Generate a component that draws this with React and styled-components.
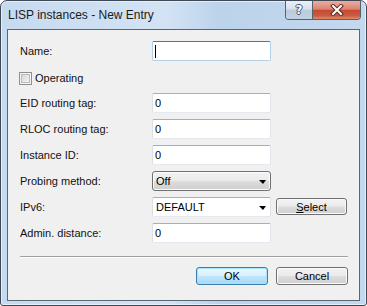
import React from "react";
import styled, { createGlobalStyle, css } from "styled-components";

const GlobalStyle = createGlobalStyle`
  html, body {
    margin: 0;
    padding: 0;
    background: #ffffff;
  }
  body {
    font-family: "Liberation Sans", Arial, sans-serif;
    color: #000;
  }
`;

const Window = styled.div`
  width: 367px;
  height: 306px;
  box-sizing: border-box;
  display: flex;
  flex-direction: column;
  border: 1px solid #3f4956;
  border-radius: 7px 7px 3px 3px;
  background: linear-gradient(90deg, #c6daef 0%, #d3e3f4 45%, #bcd3ec 60%, #c4d8ee 100%);
  box-shadow: inset 0 0 0 1px #e6eff9;
  overflow: hidden;
`;

const TitleBar = styled.div`
  height: 28px;
  display: flex;
  align-items: flex-start;
  padding-left: 7px;
  flex-shrink: 0;
`;

const Title = styled.div`
  font-size: 12px;
  line-height: 14px;
  margin-top: 7px;
  color: #1b1b1b;
`;

/* caption buttons (help + close) */
const Caption = styled.div`
  margin-left: auto;
  margin-right: 5px;
  display: flex;
  height: 18px;
  border: 1px solid #56626f;
  border-top: none;
  border-radius: 0 0 4px 4px;
  overflow: hidden;
`;

const CaptionButton = styled.div`
  display: flex;
  align-items: center;
  justify-content: center;
  height: 100%;
  ${props =>
    props.close
      ? css`
          width: 47px;
          background: linear-gradient(180deg, #e9ad9f 0%, #dc8472 45%, #c84a33 52%, #c95a40 80%, #dc8a6a 100%);
        `
      : css`
          width: 26px;
          border-right: 1px solid #56626f;
          background: linear-gradient(180deg, #eaf0f7 0%, #d6e1ed 45%, #bccbdc 52%, #c4d3e3 100%);
        `}
`;

const HelpGlyph = styled.span`
  font-family: "DejaVu Sans", sans-serif;
  font-weight: bold;
  font-size: 12px;
  line-height: 12px;
  color: #fff;
  text-shadow: 1px 0 0 #4a5460, -1px 0 0 #4a5460, 0 1px 0 #4a5460, 0 -1px 0 #4a5460;
`;

const Client = styled.div`
  flex: 1;
  margin: 0 6px 4px 6px;
  border: 1px solid #5b6675;
  background: #f0f0f0;
  padding: 11px 11px 14px 12px;
  display: flex;
  flex-direction: column;
`;

const Form = styled.div`
  display: grid;
  grid-template-columns: 127px 119px 71px;
  column-gap: 5px;
  grid-auto-rows: 20px;
  row-gap: 6px;
  font-size: 11px;
`;

const Label = styled.div`
  grid-column: 1;
  display: flex;
  align-items: center;
  font-size: 11px;
  color: #111;
  white-space: nowrap;
`;

const CheckRow = styled.div`
  grid-column: 1 / span 3;
  display: flex;
  align-items: center;
  margin-left: -1px;
  padding-top: 2px;
  gap: 3px;
  color: #111;
`;

const CheckBox = styled.div`
  width: 13px;
  height: 13px;
  box-sizing: border-box;
  border: 1px solid #8e8f8f;
  background: linear-gradient(135deg, #cdd0d5 0%, #e6e7e9 55%, #f8f8f8 100%);
  box-shadow: inset 0 0 0 1px #f4f4f4, inset 0 0 0 2px #b9bcc1;
`;

const TextBox = styled.div`
  grid-column: 2;
  height: 20px;
  box-sizing: border-box;
  display: flex;
  align-items: center;
  padding: 0 2px 0 2px;
  background: #fff;
  border: 1px solid;
  border-color: #abadb3 #e2e3ea #e3e9ef #dbdfe6;
  border-radius: 2px;
  font-size: 11px;
  ${props =>
    props.focused &&
    css`
      border-color: #3d7bad #b5cfe7 #b5cfe7 #b5cfe7;
    `}
`;

const Caret = styled.span`
  width: 1px;
  height: 13px;
  background: #000;
`;

const DropList = styled.div`
  grid-column: 2;
  height: 20px;
  box-sizing: border-box;
  display: flex;
  align-items: center;
  justify-content: space-between;
  padding: 0 4px 0 3px;
  border: 1px solid #707070;
  border-radius: 3px;
  background: linear-gradient(180deg, #f2f2f2 0%, #ebebeb 48%, #dddddd 52%, #cfcfcf 100%);
  box-shadow: inset 0 0 0 1px #fcfcfc;
`;

const ComboBox = styled(TextBox)`
  justify-content: space-between;
  padding: 0 4px 0 3px;
`;

const Arrow = styled.span`
  width: 0;
  height: 0;
  border-left: 4px solid transparent;
  border-right: 3px solid transparent;
  border-top: 4px solid #000;
  margin-top: 1px;
`;

const Button = styled.div`
  height: 18px;
  box-sizing: border-box;
  display: flex;
  align-items: center;
  justify-content: center;
  border: 1px solid #707070;
  border-radius: 3px;
  font-size: 11px;
  color: #000;
  background: linear-gradient(180deg, #f2f2f2 0%, #ebebeb 48%, #dddddd 52%, #cfcfcf 100%);
  box-shadow: inset 0 0 0 1px #fbfbfb;
  ${props =>
    props.primary &&
    css`
      border-color: #3c7fb1;
      background: linear-gradient(180deg, #eaf6fd 0%, #d9f0fc 48%, #bee6fd 52%, #a7d9f5 100%);
      box-shadow: inset 0 0 0 1px #a5e2fc;
    `}
`;

const SideButton = styled(Button)`
  grid-column: 3;
  margin-top: 1px;
  height: 17px;
`;

const Separator = styled.div`
  margin-top: 13px;
  height: 1px;
  background: #a0a0a0;
  border-bottom: 1px solid #ffffff;
`;

const Actions = styled.div`
  margin-top: 9px;
  display: flex;
  justify-content: flex-end;
  gap: 8px;
  ${Button} {
    width: 72px;
  }
`;

function CloseIcon() {
  return (
    <svg width="14" height="12" viewBox="0 0 14 12">
      <path d="M3 2 L11 10 M11 2 L3 10" stroke="#5a2a22" strokeWidth="4" strokeLinecap="square" />
      <path d="M3 2 L11 10 M11 2 L3 10" stroke="#ffffff" strokeWidth="2" strokeLinecap="square" />
    </svg>
  );
}

export default function App() {
  return (
    <>
      <GlobalStyle />
      <Window>
        <TitleBar>
          <Title>LISP instances - New Entry</Title>
          <Caption>
            <CaptionButton>
              <HelpGlyph>?</HelpGlyph>
            </CaptionButton>
            <CaptionButton close>
              <CloseIcon />
            </CaptionButton>
          </Caption>
        </TitleBar>
        <Client>
          <Form>
            <Label>Name:</Label>
            <TextBox focused>
              <Caret />
            </TextBox>

            <CheckRow>
              <CheckBox />
              <span>Operating</span>
            </CheckRow>

            <Label>EID routing tag:</Label>
            <TextBox>0</TextBox>

            <Label>RLOC routing tag:</Label>
            <TextBox>0</TextBox>

            <Label>Instance ID:</Label>
            <TextBox>0</TextBox>

            <Label>Probing method:</Label>
            <DropList>
              <span>Off</span>
              <Arrow />
            </DropList>

            <Label>IPv6:</Label>
            <ComboBox>
              <span>DEFAULT</span>
              <Arrow />
            </ComboBox>
            <SideButton>
              <span>
                <u>S</u>elect
              </span>
            </SideButton>

            <Label>Admin. distance:</Label>
            <TextBox>0</TextBox>
          </Form>
          <Separator />
          <Actions>
            <Button primary>OK</Button>
            <Button>Cancel</Button>
          </Actions>
        </Client>
      </Window>
    </>
  );
}
